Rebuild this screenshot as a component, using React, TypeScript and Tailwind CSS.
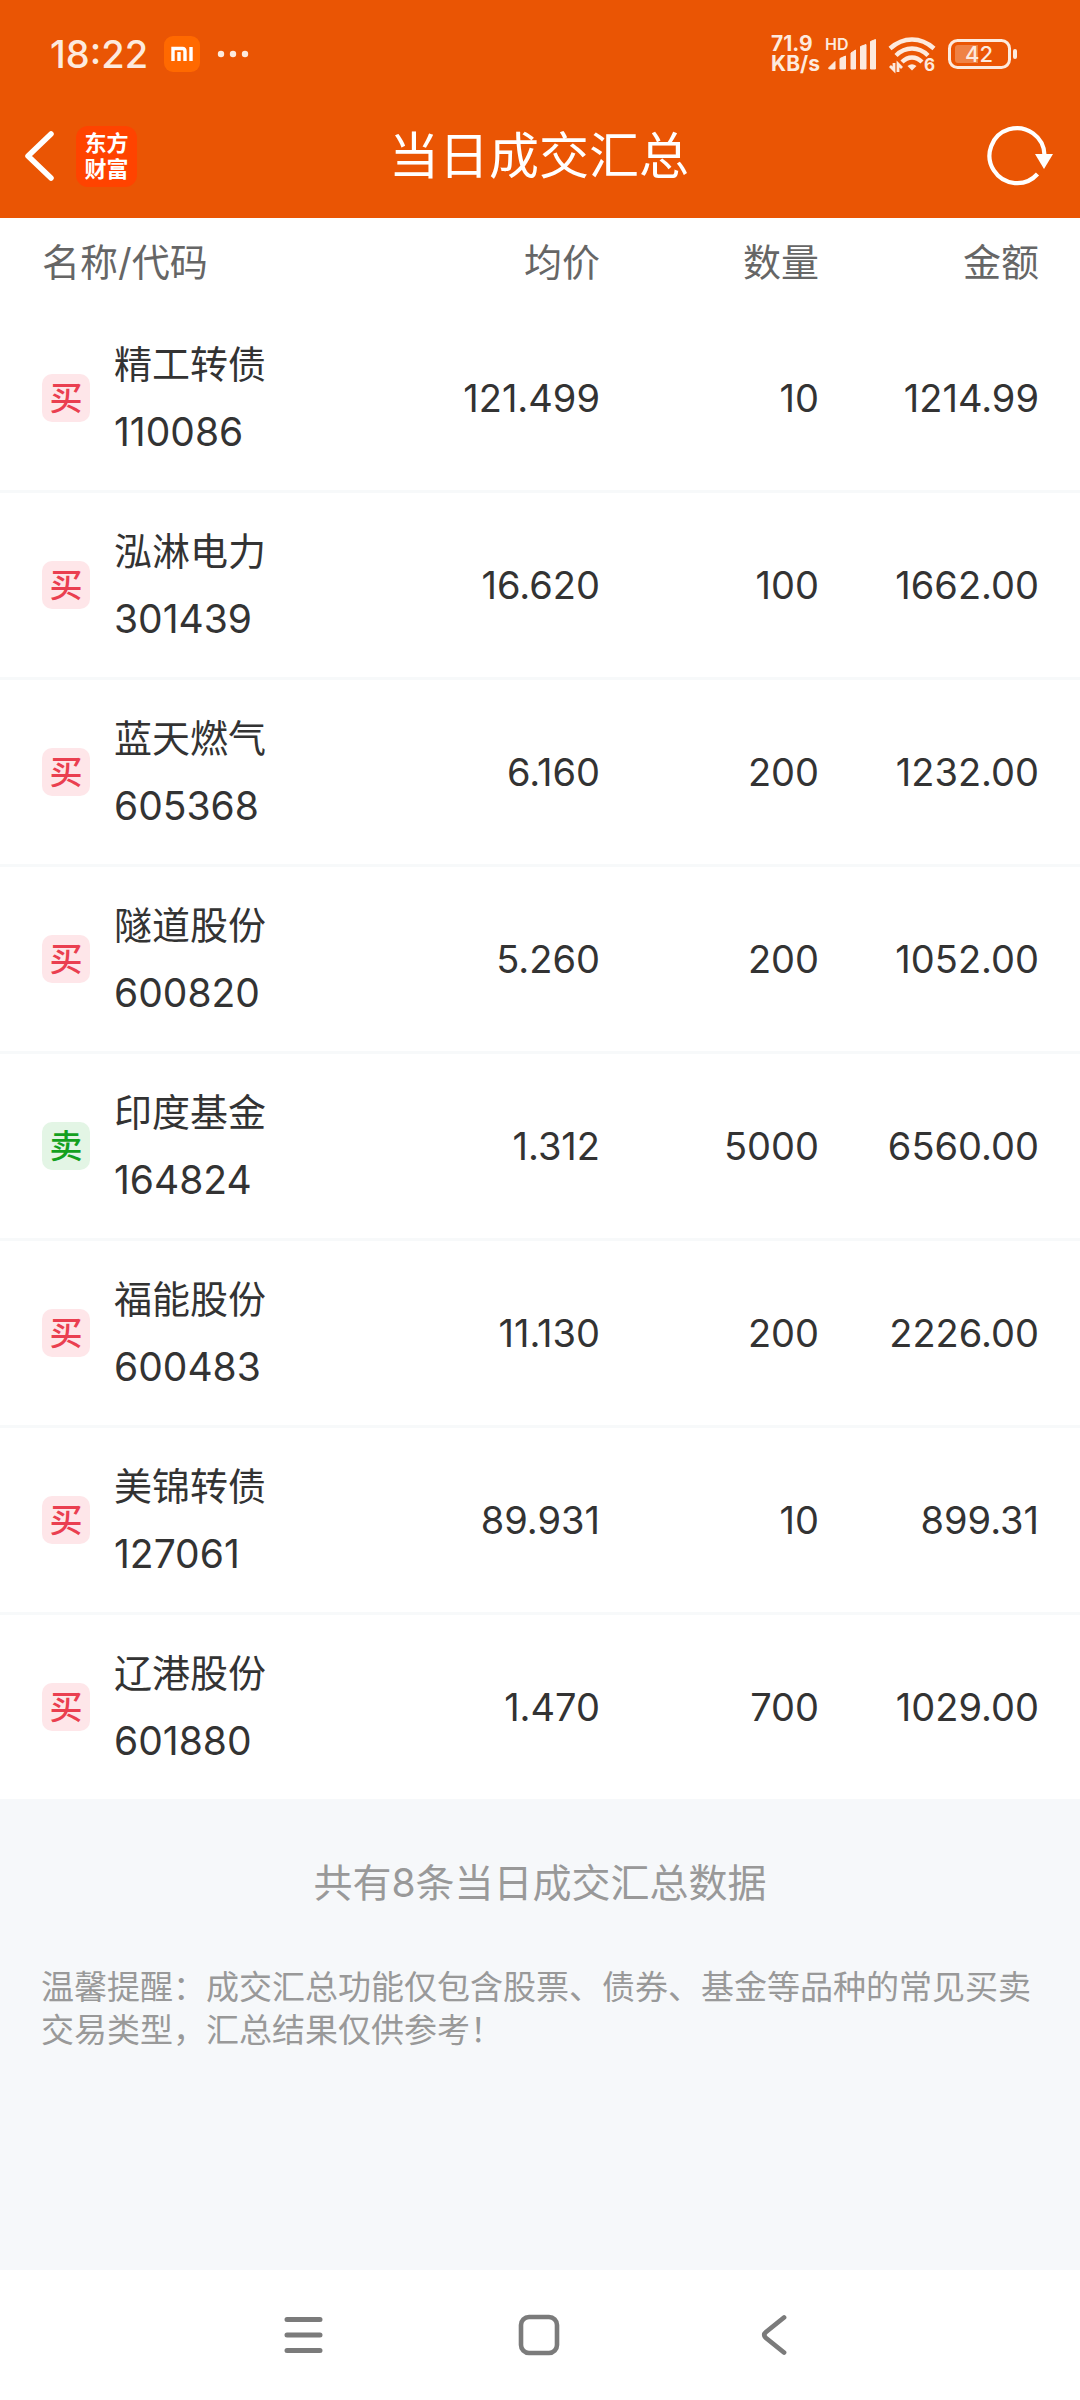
interface Trade {
  side: 'buy' | 'sell';
  name: string;
  code: string;
  price: string;
  quantity: string;
  amount: string;
}

const trades: Trade[] = [
  { side: 'buy', name: '精工转债', code: '110086', price: '121.499', quantity: '10', amount: '1214.99' },
  { side: 'buy', name: '泓淋电力', code: '301439', price: '16.620', quantity: '100', amount: '1662.00' },
  { side: 'buy', name: '蓝天燃气', code: '605368', price: '6.160', quantity: '200', amount: '1232.00' },
  { side: 'buy', name: '隧道股份', code: '600820', price: '5.260', quantity: '200', amount: '1052.00' },
  { side: 'sell', name: '印度基金', code: '164824', price: '1.312', quantity: '5000', amount: '6560.00' },
  { side: 'buy', name: '福能股份', code: '600483', price: '11.130', quantity: '200', amount: '2226.00' },
  { side: 'buy', name: '美锦转债', code: '127061', price: '89.931', quantity: '10', amount: '899.31' },
  { side: 'buy', name: '辽港股份', code: '601880', price: '1.470', quantity: '700', amount: '1029.00' },
];

function StatusBar() {
  return (
    <div className="flex h-[94px] items-center justify-between pt-3.5 pr-[62px] pl-[50px] text-[#fdeade]">
      <div className="flex items-center">
        <span className="text-[38px] leading-10 font-medium">18:22</span>
        <svg className="ml-4 h-9 w-9" viewBox="0 0 36 36">
          <rect width="36" height="36" rx="9" fill="#ff6900" />
          <path d="M9 25V12.500H18.500Q21 12.500 21 15.500V25M15 16V25M27 11V25" fill="none" stroke="#fff" strokeWidth="3.400" />
        </svg>
        <svg className="ml-[17px] h-2 w-8" viewBox="0 0 32 8" fill="currentColor">
          <circle cx="4" cy="4" r="3.200" />
          <circle cx="16" cy="4" r="3.200" />
          <circle cx="28" cy="4" r="3.200" />
        </svg>
      </div>

      <div className="flex items-center">
        <div className="text-[21px] leading-5 font-bold">
          <div>71.9</div>
          <div>KB/s</div>
        </div>
        <svg className="ml-1 h-11 w-[54px]" viewBox="-2 -4 54 44" fill="currentColor">
          <text x="-1" y="14" fontSize="16" fontWeight="600">HD</text>
          <path d="M3 31.500L9 25.500V33H4Q2.500 33 2.500 32Z" stroke="currentColor" strokeLinejoin="round" />
          <path d="M14 22.500L19.500 20V33H14Z" stroke="currentColor" strokeLinejoin="round" />
          <path d="M25 17L29.500 14V33H25Z" stroke="currentColor" strokeLinejoin="round" />
          <path d="M34.500 10.500L40 8.500V33H34.500Z" stroke="currentColor" strokeLinejoin="round" />
          <path d="M44.500 5.500L49.500 3.500V33H44.500Z" stroke="currentColor" strokeLinejoin="round" />
        </svg>
        <svg className="ml-2.5 h-11 w-13" viewBox="0 -4 52 44" fill="none" stroke="currentColor" strokeWidth="4.400">
          <path d="M2 12.500Q12 3.500 24 3.500T46 12.500" />
          <path d="M8 19.500Q15 12.500 24 12.500T40 19.500" />
          <path d="M14 26Q18.500 21.500 24 21.500T34 26" />
          <path d="M19.500 30Q24 26.500 28.500 30L24 34.500Z" fill="currentColor" stroke="none" />
          <path d="M6 27V34L2 30M10 36V28L14 32" strokeWidth="2.800" />
          <text x="36" y="35" fontSize="17" fontWeight="700" fill="currentColor" stroke="none">6</text>
        </svg>
        <svg className="ml-2 h-8 w-[70px]" viewBox="0 0 70 32" fill="none">
          <rect x="1.500" y="2.500" width="60" height="27" rx="8" stroke="currentColor" strokeWidth="3" />
          <path d="M10 7H30V25H10Q7 25 7 22V10Q7 7 10 7Z" fill="currentColor" opacity="0.3" />
          <rect x="65" y="11" width="4" height="10" rx="2" fill="currentColor" />
          <text x="31" y="24" textAnchor="middle" fontSize="22" fontWeight="500" fill="currentColor">42</text>
        </svg>
      </div>
    </div>
  );
}

function TitleBar() {
  return (
    <div className="grid h-[124px] grid-cols-[1fr_auto_1fr] items-center pr-[26px] pl-6 text-white">
      <div className="flex items-center">
        <button type="button" aria-label="返回" className="h-[52px] w-8">
          <svg className="h-[52px] w-8" viewBox="0 0 32 52" fill="none" stroke="currentColor" strokeWidth="5.500" strokeLinecap="round" strokeLinejoin="round">
            <path d="M27 4L4 26L27 48" />
          </svg>
        </button>
        <div className="ml-5 flex h-[61px] w-[61px] flex-col items-center justify-center rounded-xl bg-[#ff4300] text-[22px] leading-[26px] font-bold">
          <span>东方</span>
          <span>财富</span>
        </div>
      </div>
      <h1 className="text-[50px] leading-[60px]">当日成交汇总</h1>
      <button type="button" aria-label="刷新" className="h-16 w-[68px] justify-self-end">
        <svg className="h-16 w-[68px]" viewBox="0 0 68 64" fill="none">
          <path d="M51.500 50A27.500 27.500 0 1 1 58.500 31" stroke="currentColor" strokeWidth="4.200" />
          <path d="M49 30H67L58 45Z" fill="currentColor" />
        </svg>
      </button>
    </div>
  );
}

function SideBadge({ side }: { side: Trade['side'] }) {
  if (side === 'sell') {
    return (
      <span className="flex h-12 w-12 items-center justify-center rounded-[10px] bg-[#e3f5e5] text-[33px] leading-8 font-medium text-[#14a01e]">
        卖
      </span>
    );
  }
  return (
    <span className="flex h-12 w-12 items-center justify-center rounded-[10px] bg-[#fee6e9] text-[33px] leading-8 font-medium text-[#ea3f50]">
      买
    </span>
  );
}

function TradeTable() {
  return (
    <table className="w-full table-fixed border-separate border-spacing-0 bg-white text-right text-[#333333]">
      <thead className="text-[38px] leading-[44px] text-[#666666]">
        <tr className="h-[88px]">
          <th className="pl-[42px] text-left font-normal">名称/代码</th>
          <th className="w-[240px] font-normal">均价</th>
          <th className="w-[219px] font-normal">数量</th>
          <th className="w-[261px] pr-[41px] font-normal">金额</th>
        </tr>
      </thead>
      <tbody className="text-[38px] leading-[67px] [&>tr:last-child>td]:h-[184px] [&>tr:last-child>td]:border-b-0 [&>tr>td]:h-[187px] [&>tr>td]:border-b-3 [&>tr>td]:border-[#f7f9fa]">
        {trades.map((trade) => (
          <tr key={trade.code}>
            <td className="pl-[42px]">
              <div className="flex items-center gap-6 text-left">
                <SideBadge side={trade.side} />
                <div>
                  <div>{trade.name}</div>
                  <div className="text-[39px]">{trade.code}</div>
                </div>
              </div>
            </td>
            <td>{trade.price}</td>
            <td>{trade.quantity}</td>
            <td className="pr-[41px]">{trade.amount}</td>
          </tr>
        ))}
      </tbody>
    </table>
  );
}

function NavBar() {
  return (
    <nav className="flex h-[130px] items-center justify-center bg-white text-[#7b7b7b]">
      <button type="button" aria-label="最近任务" className="flex w-59 justify-center">
        <svg className="h-11 w-11" viewBox="0 0 44 44" stroke="currentColor" strokeWidth="5" strokeLinecap="round">
          <path d="M5 6.500H38M5 22H38M5 37.500H38" />
        </svg>
      </button>
      <button type="button" aria-label="主屏幕" className="flex w-59 justify-center">
        <svg className="h-11 w-11" viewBox="0 0 44 44" fill="none" stroke="currentColor" strokeWidth="4.600">
          <rect x="3" y="4" width="36" height="36" rx="8" />
        </svg>
      </button>
      <button type="button" aria-label="返回上一页" className="flex w-59 justify-center">
        <svg className="h-11 w-11" viewBox="0 0 44 44" fill="none" stroke="currentColor" strokeWidth="4.800" strokeLinecap="round">
          <path d="M30 4.500L12 19Q8.500 22 12 25L30 39.500" />
        </svg>
      </button>
    </nav>
  );
}

export default function App() {
  return (
    <div className="flex min-h-screen flex-col bg-[#f6f8fa] font-['Inter','Noto_Sans_CJK_SC',sans-serif]">
      <header className="bg-[#ea5504]">
        <StatusBar />
        <TitleBar />
      </header>
      <main className="flex-1">
        <TradeTable />
        <div className="px-[41px] text-[#999999]">
          <p className="pt-[60px] text-center text-[39px] leading-[48px]">共有8条当日成交汇总数据</p>
          <p className="pt-[59px] text-[33px] leading-[43px]">
            温馨提醒：成交汇总功能仅包含股票、债券、基金等品种的常见买卖交易类型，汇总结果仅供参考！
          </p>
        </div>
      </main>
      <NavBar />
    </div>
  );
}
